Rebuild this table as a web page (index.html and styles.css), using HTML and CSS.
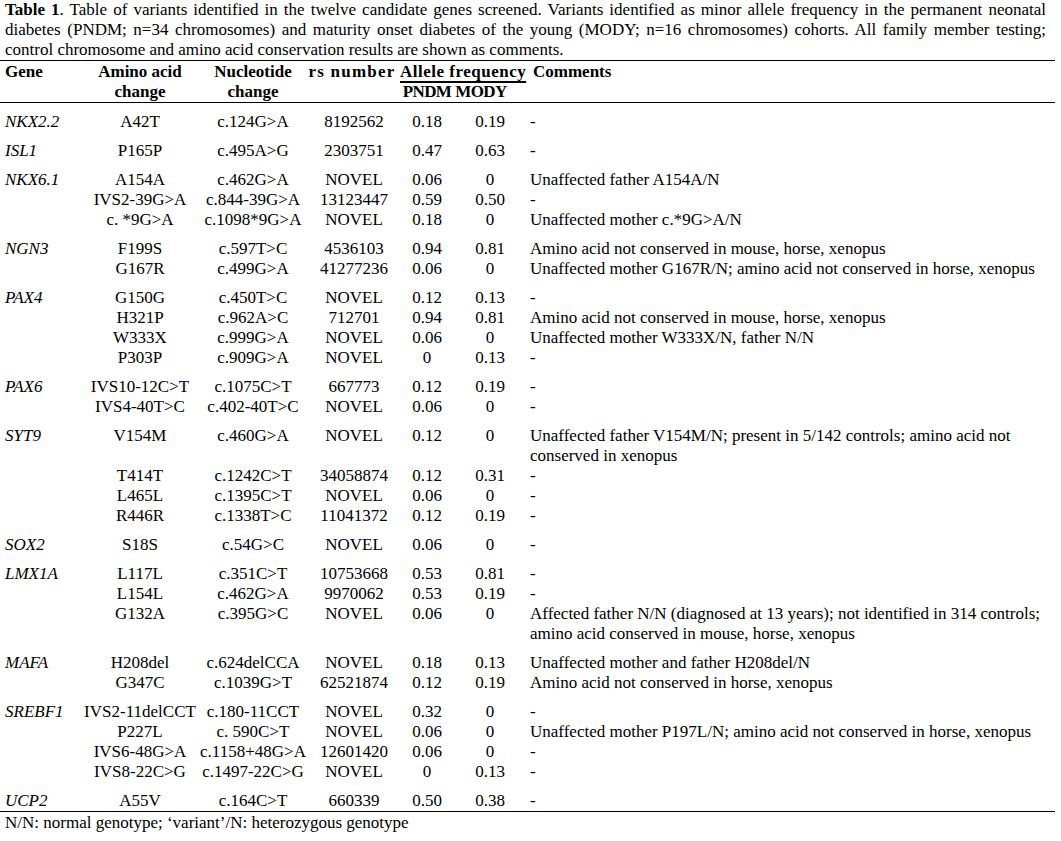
FILE: index.html
```html
<!DOCTYPE html>
<html lang="en">
<head>
<meta charset="utf-8">
<title>Table 1</title>
<link rel="stylesheet" href="styles.css">
</head>
<body>
<div class="page">
  <p class="caption">
    <span class="line just"><b>Table 1</b>. Table of variants identified in the twelve candidate genes screened. Variants identified as minor allele frequency in the permanent neonatal</span>
    <span class="line just">diabetes (PNDM; n=34 chromosomes) and maturity onset diabetes of the young (MODY; n=16 chromosomes) cohorts. All family member testing;</span>
    <span class="line">control chromosome and amino acid conservation results are shown as comments.</span>
  </p>
  <table class="variants">
    <colgroup>
      <col class="c-gene"><col class="c-aa"><col class="c-nt"><col class="c-rs"><col class="c-pndm"><col class="c-mody"><col class="c-cm">
    </colgroup>
    <thead>
      <tr class="h1">
        <th rowspan="2" class="gene">Gene</th>
        <th rowspan="2">Amino acid<br>change</th>
        <th rowspan="2">Nucleotide<br>change</th>
        <th rowspan="2" class="rs">rs number</th>
        <th colspan="2" class="af"><span class="ul">Allele frequency</span></th>
        <th rowspan="2" class="cm">Comments</th>
      </tr>
      <tr>
        <th class="pndm">PNDM</th>
        <th class="mody">MODY</th>
      </tr>
    </thead>
    <tbody class="grp">
      <tr><td class="gene">NKX2.2</td><td>A42T</td><td>c.124G&gt;A</td><td>8192562</td><td>0.18</td><td class="mody">0.19</td><td class="cm">-</td></tr>
    </tbody>
    <tbody class="grp">
      <tr><td class="gene">ISL1</td><td>P165P</td><td>c.495A&gt;G</td><td>2303751</td><td>0.47</td><td class="mody">0.63</td><td class="cm">-</td></tr>
    </tbody>
    <tbody class="grp">
      <tr><td class="gene">NKX6.1</td><td>A154A</td><td>c.462G&gt;A</td><td>NOVEL</td><td>0.06</td><td class="mody">0</td><td class="cm">Unaffected father A154A/N</td></tr>
      <tr><td class="gene"></td><td>IVS2-39G&gt;A</td><td>c.844-39G&gt;A</td><td>13123447</td><td>0.59</td><td class="mody">0.50</td><td class="cm">-</td></tr>
      <tr><td class="gene"></td><td>c. *9G&gt;A</td><td>c.1098*9G&gt;A</td><td>NOVEL</td><td>0.18</td><td class="mody">0</td><td class="cm">Unaffected mother c.*9G&gt;A/N</td></tr>
    </tbody>
    <tbody class="grp">
      <tr><td class="gene">NGN3</td><td>F199S</td><td>c.597T&gt;C</td><td>4536103</td><td>0.94</td><td class="mody">0.81</td><td class="cm">Amino acid not conserved in mouse, horse, xenopus</td></tr>
      <tr><td class="gene"></td><td>G167R</td><td>c.499G&gt;A</td><td>41277236</td><td>0.06</td><td class="mody">0</td><td class="cm">Unaffected mother G167R/N; amino acid not conserved in horse, xenopus</td></tr>
    </tbody>
    <tbody class="grp">
      <tr><td class="gene">PAX4</td><td>G150G</td><td>c.450T&gt;C</td><td>NOVEL</td><td>0.12</td><td class="mody">0.13</td><td class="cm">-</td></tr>
      <tr><td class="gene"></td><td>H321P</td><td>c.962A&gt;C</td><td>712701</td><td>0.94</td><td class="mody">0.81</td><td class="cm">Amino acid not conserved in mouse, horse, xenopus</td></tr>
      <tr><td class="gene"></td><td>W333X</td><td>c.999G&gt;A</td><td>NOVEL</td><td>0.06</td><td class="mody">0</td><td class="cm">Unaffected mother W333X/N, father N/N</td></tr>
      <tr><td class="gene"></td><td>P303P</td><td>c.909G&gt;A</td><td>NOVEL</td><td>0</td><td class="mody">0.13</td><td class="cm">-</td></tr>
    </tbody>
    <tbody class="grp">
      <tr><td class="gene">PAX6</td><td>IVS10-12C&gt;T</td><td>c.1075C&gt;T</td><td>667773</td><td>0.12</td><td class="mody">0.19</td><td class="cm">-</td></tr>
      <tr><td class="gene"></td><td>IVS4-40T&gt;C</td><td>c.402-40T&gt;C</td><td>NOVEL</td><td>0.06</td><td class="mody">0</td><td class="cm">-</td></tr>
    </tbody>
    <tbody class="grp">
      <tr><td class="gene">SYT9</td><td>V154M</td><td>c.460G&gt;A</td><td>NOVEL</td><td>0.12</td><td class="mody">0</td><td class="cm">Unaffected father V154M/N; present in 5/142 controls; amino acid not<br>conserved in xenopus</td></tr>
      <tr><td class="gene"></td><td>T414T</td><td>c.1242C&gt;T</td><td>34058874</td><td>0.12</td><td class="mody">0.31</td><td class="cm">-</td></tr>
      <tr><td class="gene"></td><td>L465L</td><td>c.1395C&gt;T</td><td>NOVEL</td><td>0.06</td><td class="mody">0</td><td class="cm">-</td></tr>
      <tr><td class="gene"></td><td>R446R</td><td>c.1338T&gt;C</td><td>11041372</td><td>0.12</td><td class="mody">0.19</td><td class="cm">-</td></tr>
    </tbody>
    <tbody class="grp">
      <tr><td class="gene">SOX2</td><td>S18S</td><td>c.54G&gt;C</td><td>NOVEL</td><td>0.06</td><td class="mody">0</td><td class="cm">-</td></tr>
    </tbody>
    <tbody class="grp">
      <tr><td class="gene">LMX1A</td><td>L117L</td><td>c.351C&gt;T</td><td>10753668</td><td>0.53</td><td class="mody">0.81</td><td class="cm">-</td></tr>
      <tr><td class="gene"></td><td>L154L</td><td>c.462G&gt;A</td><td>9970062</td><td>0.53</td><td class="mody">0.19</td><td class="cm">-</td></tr>
      <tr><td class="gene"></td><td>G132A</td><td>c.395G&gt;C</td><td>NOVEL</td><td>0.06</td><td class="mody">0</td><td class="cm">Affected father N/N (diagnosed at 13 years); not identified in 314 controls;<br>amino acid conserved in mouse, horse, xenopus</td></tr>
    </tbody>
    <tbody class="grp">
      <tr><td class="gene">MAFA</td><td>H208del</td><td>c.624delCCA</td><td>NOVEL</td><td>0.18</td><td class="mody">0.13</td><td class="cm">Unaffected mother and father H208del/N</td></tr>
      <tr><td class="gene"></td><td>G347C</td><td>c.1039G&gt;T</td><td>62521874</td><td>0.12</td><td class="mody">0.19</td><td class="cm">Amino acid not conserved in horse, xenopus</td></tr>
    </tbody>
    <tbody class="grp">
      <tr><td class="gene">SREBF1</td><td>IVS2-11delCCT</td><td>c.180-11CCT</td><td>NOVEL</td><td>0.32</td><td class="mody">0</td><td class="cm">-</td></tr>
      <tr><td class="gene"></td><td>P227L</td><td>c. 590C&gt;T</td><td>NOVEL</td><td>0.06</td><td class="mody">0</td><td class="cm">Unaffected mother P197L/N; amino acid not conserved in horse, xenopus</td></tr>
      <tr><td class="gene"></td><td>IVS6-48G&gt;A</td><td>c.1158+48G&gt;A</td><td>12601420</td><td>0.06</td><td class="mody">0</td><td class="cm">-</td></tr>
      <tr><td class="gene"></td><td>IVS8-22C&gt;G</td><td>c.1497-22C&gt;G</td><td>NOVEL</td><td>0</td><td class="mody">0.13</td><td class="cm">-</td></tr>
    </tbody>
    <tbody class="grp last">
      <tr><td class="gene">UCP2</td><td>A55V</td><td>c.164C&gt;T</td><td>660339</td><td>0.50</td><td class="mody">0.38</td><td class="cm">-</td></tr>
    </tbody>
  </table>
  <p class="footnote">N/N: normal genotype; ‘variant’/N: heterozygous genotype</p>
</div>
</body>
</html>
```

FILE: styles.css
```css
html, body {
  margin: 0;
  padding: 0;
  background: #fff;
}

body {
  font-family: "Liberation Serif", "Times New Roman", serif;
  font-size: 17px;
  color: #000;
}

.page {
  width: 1055px;
}

.caption {
  margin: 0;
  padding: 0 9px 0 5px;
  line-height: 20px;
}

.caption .line {
  display: block;
  white-space: nowrap;
}

.caption .just {
  text-align: justify;
  text-align-last: justify;
  white-space: normal;
}

.variants {
  width: 1055px;
  table-layout: fixed;
  border-collapse: separate;
  border-spacing: 0;
  border-top: 1.5px solid #000;
  line-height: 19.85px;
}

.c-gene { width: 82px; }
.c-aa { width: 116px; }
.c-nt { width: 110px; }
.c-rs { width: 92px; }
.c-pndm { width: 54px; }
.c-mody { width: 76px; }
.c-cm { width: 525px; }

.variants th,
.variants td {
  padding: 0;
  text-align: center;
  vertical-align: top;
  white-space: nowrap;
}

.variants th {
  font-weight: bold;
  line-height: 19.8px;
  border-bottom: 1.5px solid #000;
}

.variants .h1 th {
  padding-top: 1px;
}

.variants th.af {
  border-bottom: none;
  text-align: left;
}

.variants .ul {
  letter-spacing: 0.5px;
  text-decoration: underline;
  text-decoration-thickness: 1.5px;
  text-underline-offset: 4px;
  text-decoration-skip-ink: none;
}

.variants th.rs {
  padding-right: 4px;
  letter-spacing: 1.2px;
}

.variants th.pndm,
.variants th.mody {
  letter-spacing: -0.6px;
}

.variants th.mody {
  padding-right: 22px;
}

.variants td.mody {
  padding-right: 4px;
}

.variants .gene {
  text-align: left;
  padding-left: 5px;
}

.variants td.gene {
  font-style: italic;
}

.variants .cm {
  text-align: left;
}

.variants th.cm {
  padding-left: 3px;
}

.grp tr:first-child td {
  padding-top: 9.4px;
}

.grp.last tr:last-child td {
  border-bottom: 1.5px solid #000;
}

.footnote {
  margin: 0;
  padding: 1px 0 0 5px;
  line-height: 19.8px;
}
```
